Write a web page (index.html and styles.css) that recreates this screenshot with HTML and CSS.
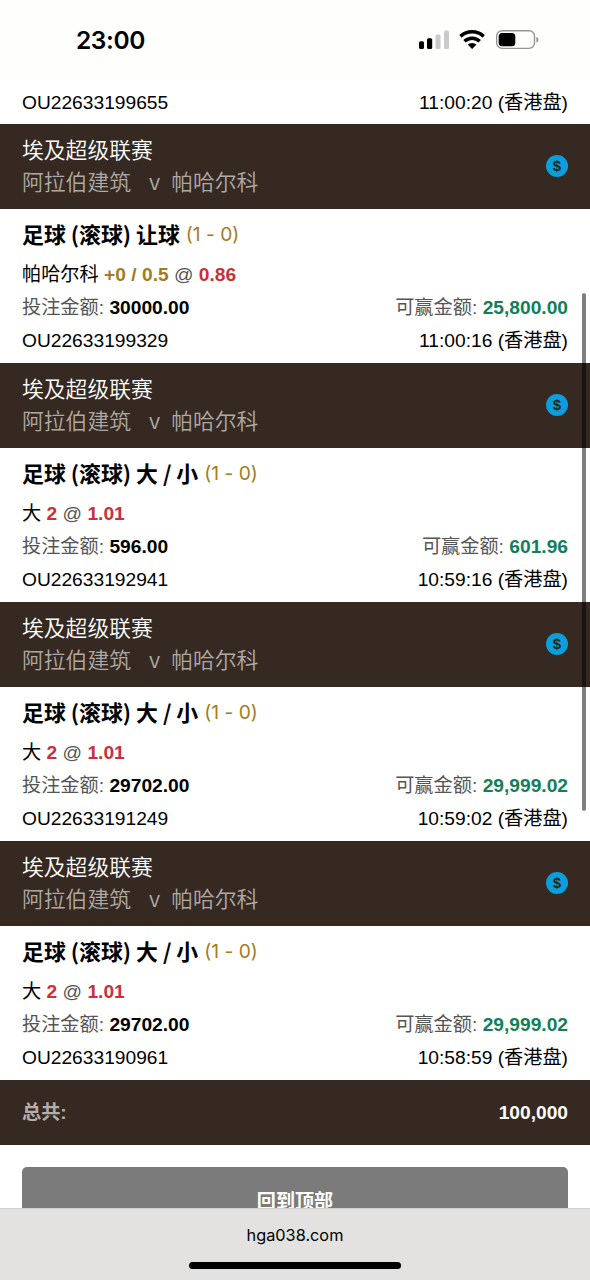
FILE: index.html
```html
<!DOCTYPE html>
<html lang="zh-CN">
<head>
<meta charset="utf-8">
<title>hga038.com</title>
<link rel="stylesheet" href="styles.css">
</head>
<body>
<div class="screen">
  <header class="status">
    <span class="clock">23:00</span>
    <svg class="status-icons" width="122" height="24" viewBox="0 0 122 24">
      <rect x="1" y="13.300" width="5" height="7.700" rx="1.500"/>
      <rect x="9" y="10.300" width="5.200" height="10.700" rx="1.500"/>
      <rect x="17.500" y="6.500" width="5" height="14.500" rx="1.500" fill="#cacaca"/>
      <rect x="26" y="2.500" width="5" height="18.500" rx="1.500" fill="#cacaca"/>
      <g fill="none" stroke="#000" stroke-width="3.500">
        <path d="M42.500 8.400a17 17 0 0 1 23.200 0"/>
        <path d="M46.500 13.200a11 11 0 0 1 15.200 0"/>
      </g>
      <path d="M49.700 16.600a6.800 6.800 0 0 1 8.800 0L54.100 21z"/>
      <rect x="78.700" y="2.700" width="37.800" height="17.700" rx="5.500" fill="none" stroke="#969696" stroke-width="1.400"/>
      <rect x="80.700" y="5" width="16.600" height="13.200" rx="3.500"/>
      <path d="M118.300 8.800q2.200.8 2.200 2.900t-2.200 2.900z" fill="#969696"/>
    </svg>
  </header>

  <main>
    <div class="row lead"><span>OU22633199655</span><span>11:00:20 (香港盘)</span></div>

    <section class="bet">
      <div class="match">
        <div class="fixture"><div class="league">埃及超级联赛</div><div class="teams">阿拉伯建筑<span class="versus">v</span>帕哈尔科</div></div>
        <svg class="coin" width="22" height="22" viewBox="0 0 22 22"><circle cx="11" cy="11" r="11"/><text x="11" y="16">$</text></svg>
      </div>
      <div class="detail">
        <div class="market"><b>足球 (滚球) 让球</b><span class="score">(1 - 0)</span></div>
        <div class="row"><span>帕哈尔科 <b class="line">+0 / 0.5</b> <span class="muted">@</span> <b class="odds">0.86</b></span></div>
        <div class="row"><span><span class="muted">投注金额:</span> <b>30000.00</b></span><span><span class="muted">可赢金额:</span> <b class="win">25,800.00</b></span></div>
        <div class="row"><span>OU22633199329</span><span>11:00:16 (香港盘)</span></div>
      </div>
    </section>

    <section class="bet">
      <div class="match">
        <div class="fixture"><div class="league">埃及超级联赛</div><div class="teams">阿拉伯建筑<span class="versus">v</span>帕哈尔科</div></div>
        <svg class="coin" width="22" height="22" viewBox="0 0 22 22"><circle cx="11" cy="11" r="11"/><text x="11" y="16">$</text></svg>
      </div>
      <div class="detail">
        <div class="market"><b>足球 (滚球) 大 / 小</b><span class="score">(1 - 0)</span></div>
        <div class="row"><span>大 <b class="odds">2</b> <span class="muted">@</span> <b class="odds">1.01</b></span></div>
        <div class="row"><span><span class="muted">投注金额:</span> <b>596.00</b></span><span><span class="muted">可赢金额:</span> <b class="win">601.96</b></span></div>
        <div class="row"><span>OU22633192941</span><span>10:59:16 (香港盘)</span></div>
      </div>
    </section>

    <section class="bet">
      <div class="match">
        <div class="fixture"><div class="league">埃及超级联赛</div><div class="teams">阿拉伯建筑<span class="versus">v</span>帕哈尔科</div></div>
        <svg class="coin" width="22" height="22" viewBox="0 0 22 22"><circle cx="11" cy="11" r="11"/><text x="11" y="16">$</text></svg>
      </div>
      <div class="detail">
        <div class="market"><b>足球 (滚球) 大 / 小</b><span class="score">(1 - 0)</span></div>
        <div class="row"><span>大 <b class="odds">2</b> <span class="muted">@</span> <b class="odds">1.01</b></span></div>
        <div class="row"><span><span class="muted">投注金额:</span> <b>29702.00</b></span><span><span class="muted">可赢金额:</span> <b class="win">29,999.02</b></span></div>
        <div class="row"><span>OU22633191249</span><span>10:59:02 (香港盘)</span></div>
      </div>
    </section>

    <section class="bet">
      <div class="match">
        <div class="fixture"><div class="league">埃及超级联赛</div><div class="teams">阿拉伯建筑<span class="versus">v</span>帕哈尔科</div></div>
        <svg class="coin" width="22" height="22" viewBox="0 0 22 22"><circle cx="11" cy="11" r="11"/><text x="11" y="16">$</text></svg>
      </div>
      <div class="detail">
        <div class="market"><b>足球 (滚球) 大 / 小</b><span class="score">(1 - 0)</span></div>
        <div class="row"><span>大 <b class="odds">2</b> <span class="muted">@</span> <b class="odds">1.01</b></span></div>
        <div class="row"><span><span class="muted">投注金额:</span> <b>29702.00</b></span><span><span class="muted">可赢金额:</span> <b class="win">29,999.02</b></span></div>
        <div class="row"><span>OU22633190961</span><span>10:58:59 (香港盘)</span></div>
      </div>
    </section>

    <div class="total"><span class="total-label">总共:</span><b>100,000</b></div>
    <div class="top-area"><button class="to-top">回到顶部</button></div>
  </main>

  <footer class="browser-bar"><span>hga038.com</span><div class="home"></div></footer>
  <div class="scrollbar"></div>
</div>
</body>
</html>
```

FILE: styles.css
```css
* { box-sizing: border-box; }
body {
  margin: 0;
  background: #fff;
  color: #000;
  font-family: "Liberation Sans", "Noto Sans CJK SC", sans-serif;
  font-size: 19.2px;
}
.screen {
  position: relative;
  display: flex;
  flex-direction: column;
  width: 590px;
  height: 1280px;
  overflow: hidden;
}
.status {
  display: flex;
  flex: none;
  justify-content: space-between;
  align-items: center;
  height: 80px;
  padding: 0 50px 0 76px;
  background: #fefefd;
}
.clock {
  font: 600 24.5px/32px Inter, sans-serif;
  letter-spacing: -.4px;
}
.status-icons { margin-top: -1px; }
main {
  flex: 1;
  min-height: 0;
  overflow: hidden;
}
.row {
  display: flex;
  justify-content: space-between;
  height: 33px;
  padding: 0 22px;
  line-height: 33px;
  white-space: nowrap;
}
.lead {
  height: 44px;
  line-height: 45px;
}
.match {
  display: flex;
  justify-content: space-between;
  align-items: flex-start;
  height: 85px;
  padding: 9px 22px 0;
  background: #352922;
  font-family: "Noto Sans CJK SC", sans-serif;
  font-size: 21.8px;
  font-weight: 350;
  line-height: 32px;
}
.league { color: #fff; }
.teams { color: #aea9a5; }
.versus { margin: 0 11px 0 18px; }
.coin { margin-top: 22px; }
.coin circle { fill: #0a9fdc; }
.coin text {
  fill: #29221e;
  font: bold 15px "Liberation Sans", sans-serif;
  text-anchor: middle;
}
.detail {
  height: 154px;
  padding-top: 6px;
}
.market {
  display: flex;
  height: 43px;
  padding: 0 22px;
  font-family: "Noto Sans CJK SC", sans-serif;
  font-size: 21.9px;
  line-height: 38px;
  white-space: nowrap;
}
.detail .row { line-height: 34px; }
.score {
  margin-left: 6px;
  color: #a37c22;
  font-family: Inter, sans-serif;
  font-feature-settings: "calt" 0;
  font-size: 19.2px;
  font-weight: 400;
  line-height: 38px;
}
.muted { color: #555; }
.line { color: #a37c22; }
.odds { color: #c9303a; }
.win { color: #11805a; }
.total {
  display: flex;
  justify-content: space-between;
  height: 65px;
  padding: 0 22px;
  background: #352922;
  color: #fff;
  line-height: 66px;
}
.total-label {
  color: #b3aeaa;
  font-weight: bold;
}
.top-area { padding: 22px 22px 0; }
.to-top {
  display: block;
  width: 100%;
  height: 66px;
  padding: 0;
  border: 0;
  border-radius: 5px;
  background: #7b7b7b;
  color: #fff;
  font: bold 19.1px/64px "Noto Sans CJK SC", sans-serif;
}
.browser-bar {
  display: flex;
  flex: none;
  flex-direction: column;
  align-items: center;
  height: 72px;
  padding-top: 14px;
  border-top: 1px solid #d2d0ce;
  background: #e4e2e1;
  font: 16.3px/24px Inter, sans-serif;
}
.home {
  width: 212px;
  height: 7px;
  margin-top: 15px;
  border-radius: 4px;
  background: #000;
}
.scrollbar {
  position: absolute;
  top: 293px;
  left: 582px;
  width: 4px;
  height: 518px;
  border-radius: 2px;
  background: rgba(0, 0, 0, .5);
}
```
